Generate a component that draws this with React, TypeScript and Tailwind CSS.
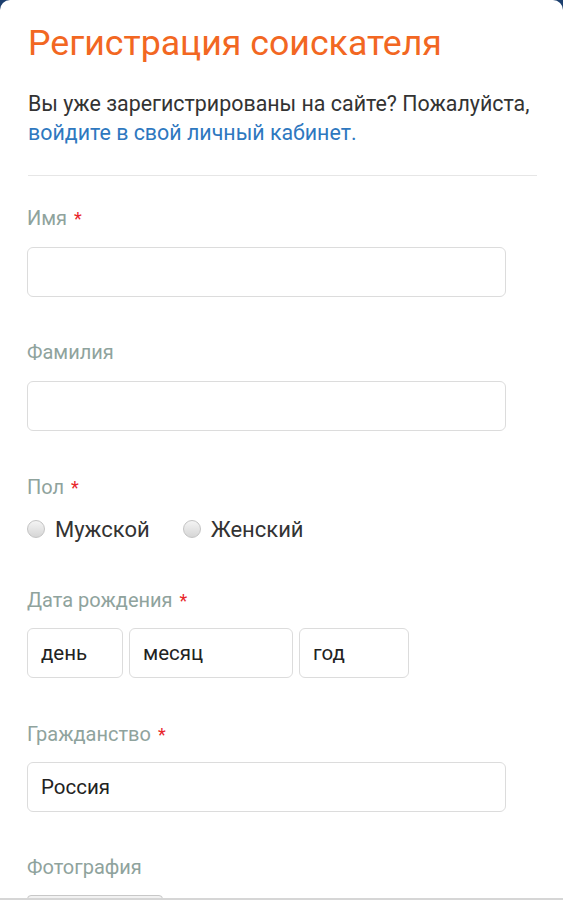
import React from "react"

const Label = ({ text, required }: { text: string; required?: boolean }) => (
  <div className="h-[24px] text-[20px] leading-[24px] text-[#8fa39d]">
    {text}
    {required && <span className="text-[#e8262b] ml-[7px] text-[18px] leading-[0]">*</span>}
  </div>
)

const Input = ({ value, className }: { value?: string; className: string }) => (
  <div
    className={`h-[50px] shrink-0 border border-[#dcdcdc] rounded-[6px] bg-white flex items-center px-[13px] text-[20.5px] text-[#222] ${className}`}
  >
    {value}
  </div>
)

const Radio = ({ label }: { label: string }) => (
  <div className="flex items-center gap-[10px]">
    <span className="w-[18px] h-[18px] rounded-full border border-[#c4c4c4] bg-gradient-to-b from-[#f4f4f4] to-[#d6d6d6]" />
    <span className="text-[22px] text-[#333]">{label}</span>
  </div>
)

export default function App() {
  return (
    <div className="w-[563px] h-[900px] bg-[#1c3f6e] overflow-hidden" style={{ fontFamily: "Roboto, 'Noto Sans', sans-serif" }}>
      <div className="h-[900px] bg-white rounded-t-[10px] border-b-2 border-[#d6d6d6] overflow-hidden px-[27px] pt-[19px]">
        <h1 className="text-[35.7px] leading-[48px] text-[#f26722] pl-[1px]">Регистрация соискателя</h1>
        <p className="mt-[22px] text-[21.4px] leading-[29px] text-[#333] pl-[1px]">
          Вы уже зарегистрированы на сайте? Пожалуйста,
          <br />
          <span className="text-[#2e78bf]">войдите в свой личный кабинет.</span>
        </p>
        <div className="mt-[28px] border-t border-[#e6e6e6] w-[509px] ml-[1px]" />

        <div className="mt-[30px]"><Label text="Имя" required /></div>
        <Input className="mt-[17px] w-[479px]" />

        <div className="mt-[43px]"><Label text="Фамилия" /></div>
        <Input className="mt-[17px] w-[479px]" />

        <div className="mt-[44px]"><Label text="Пол" required /></div>
        <div className="mt-[16px] flex gap-[33px] h-[28px]">
          <Radio label="Мужской" />
          <Radio label="Женский" />
        </div>

        <div className="mt-[45px]"><Label text="Дата рождения" required /></div>
        <div className="mt-[16px] flex gap-[6px]">
          <Input value="день" className="w-[96px]" />
          <Input value="месяц" className="w-[164px]" />
          <Input value="год" className="w-[110px]" />
        </div>

        <div className="mt-[44px]"><Label text="Гражданство" required /></div>
        <Input value="Россия" className="mt-[16px] w-[479px]" />

        <div className="mt-[43px]"><Label text="Фотография" /></div>
        <div className="mt-[16px] w-[136px] h-[30px] border border-[#c8c8c8] rounded-t-[4px] bg-[#f2f2f2]" />
      </div>
    </div>
  )
}
